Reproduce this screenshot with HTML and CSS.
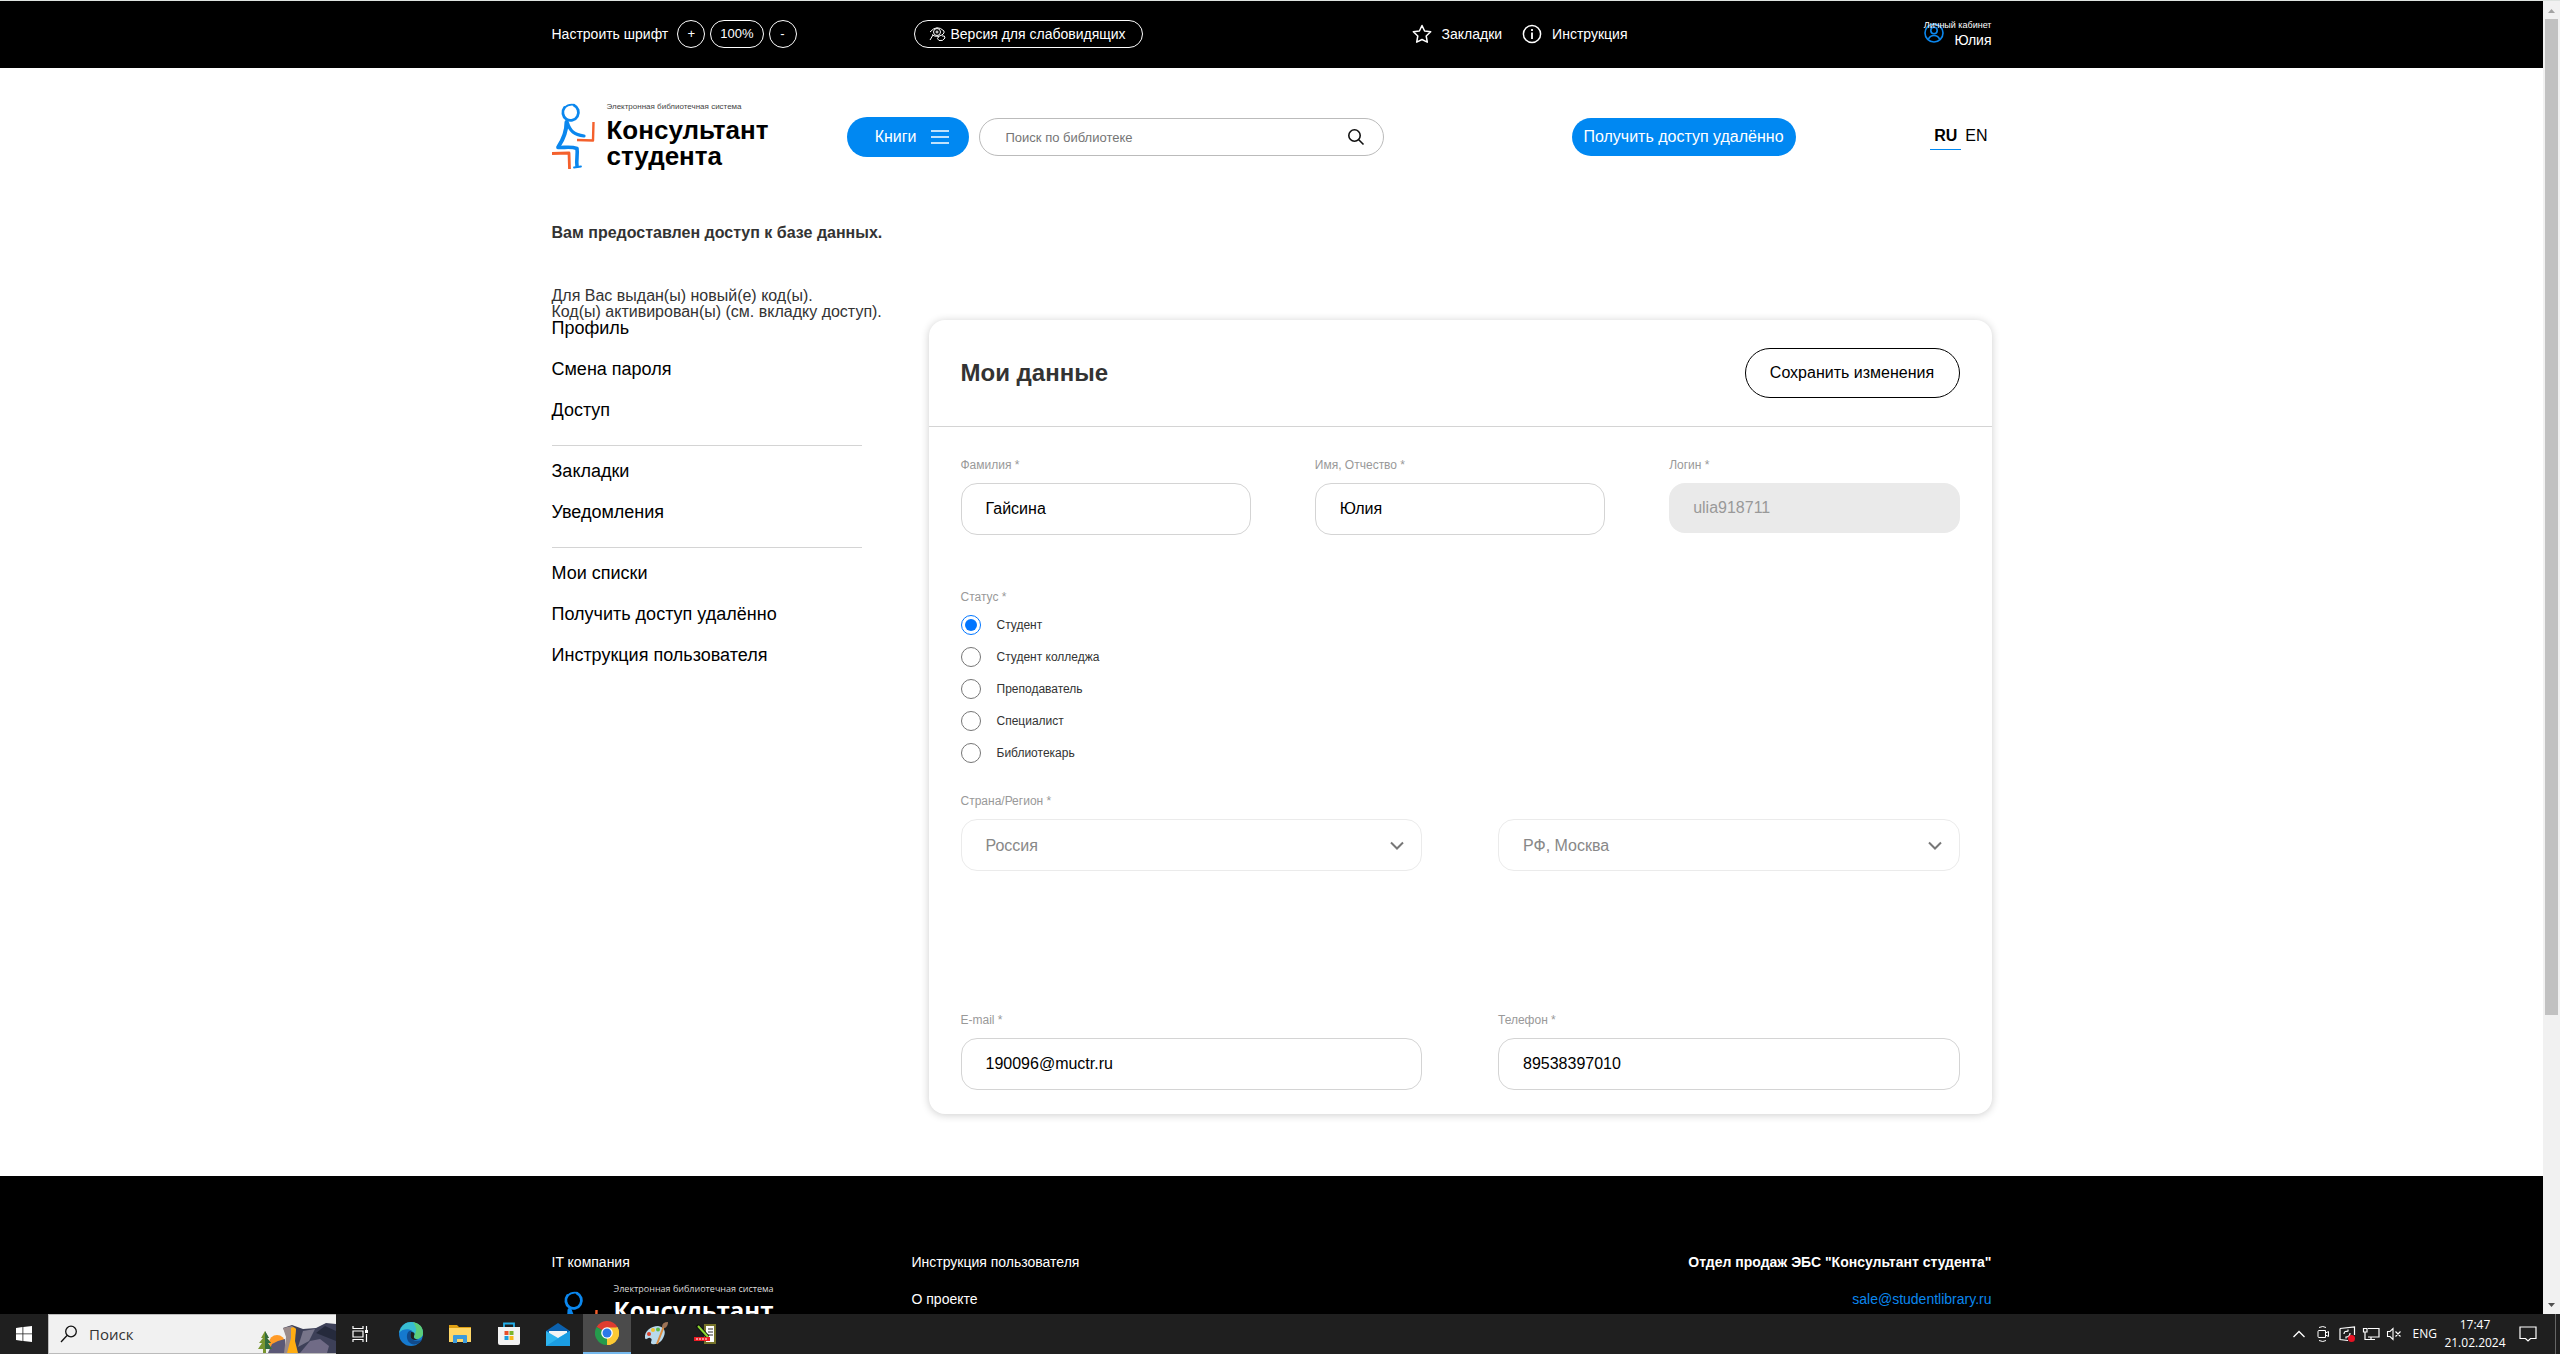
FILE: index.html
```html
<!DOCTYPE html>
<html lang="ru">
<head>
<meta charset="utf-8">
<title>Мои данные — Консультант студента</title>
<link rel="stylesheet" href="styles.css">
</head>
<body>
<svg class="sprite" aria-hidden="true">
  <symbol id="logo-figure" viewBox="0 0 43 68">
    <g fill="none" stroke="#0b87ee" stroke-linecap="round" stroke-linejoin="round">
      <path d="M12.500 4.500A7.800 8 0 1 0 22 2.200" stroke-width="2.800"/>
      <path d="M13 4.500Q16 1 22 1.800" stroke-width="1.600"/>
      <path d="M14.500 19C14.500 28 11.500 36 6.500 43.500" stroke-width="4"/>
      <path d="M15.500 20C18 28 22 31.500 32 33" stroke-width="3.200"/>
      <path d="M6 44.500C12 45 18 43 25 45.500C26 52 24 57 25 63" stroke-width="3.600"/>
      <path d="M22 64.500L29 63.500" stroke-width="1.800"/>
    </g>
    <g fill="none" stroke="#f4602c" stroke-linejoin="round">
      <path d="M41.500 19L41 37.500L25 37" stroke-width="2.400"/>
      <path d="M0 50.500L17 50L17.500 66" stroke-width="2.800"/>
    </g>
  </symbol>
</svg>

<div class="browser">
  <div class="page">
    <div class="topbar">
      <div class="wrap topbar-row">
        <div class="font-size">
          <span>Настроить шрифт</span>
          <button class="pill round" type="button">+</button>
          <button class="pill" type="button">100%</button>
          <button class="pill round" type="button">-</button>
        </div>
        <button class="pill vision" type="button">
          <svg width="17" height="16" viewBox="0 0 17 16" fill="none" stroke="#fff"><path d="M1 6Q8-2 15 5Q16 7 13 9Q7 12 3 8.500"/><circle cx="8" cy="6" r="3.500"/><circle cx="8" cy="6" r="1"/><path d="M4 9L1 14M10 10Q7 13 10 14.500Q14 15.500 16 12Q16 9 13 10"/></svg>
          Версия для слабовидящих
        </button>
        <nav class="quick">
          <a href="#"><svg width="20" height="20" viewBox="0 0 20 20" fill="none" stroke="#fff" stroke-width="1.500" stroke-linejoin="round"><path d="M10 1.500L12.600 7L18.700 7.800L14.200 12L15.300 18.200L10 15.500L4.700 18.200L5.800 12L1.300 7.800L7.400 7Z"/></svg>Закладки</a>
          <a href="#"><svg width="20" height="20" viewBox="0 0 20 20" fill="none" stroke="#fff" stroke-width="1.500"><circle cx="10" cy="10" r="8.600"/><path d="M10 8.500V15M10 5V7" stroke-width="1.800"/></svg>Инструкция</a>
        </nav>
        <a class="account" href="#">
          <svg class="account-icon" width="20" height="20" viewBox="0 0 20 20" fill="none" stroke="#0b87ee" stroke-width="1.600"><circle cx="10" cy="10" r="9"/><circle cx="10" cy="7.500" r="3.200"/><path d="M4.500 16Q6 12.500 10 12.500T15.500 16"/></svg>
          <span class="account-title">Личный кабинет</span>
          <span class="account-name">Юлия</span>
        </a>
      </div>
    </div>

    <header class="wrap header">
      <a class="logo" href="#">
        <svg width="43" height="68"><use href="#logo-figure"/></svg>
        <span><small>Электронная библиотечная система</small><b>Консультант<br>студента</b></span>
      </a>
      <button class="blue books" type="button">Книги
        <svg width="18" height="14" viewBox="0 0 18 14" stroke="#fff" stroke-width="1.500"><path d="M0 1H18M0 7H18M0 13H18"/></svg>
      </button>
      <form class="search">
        <input type="text" placeholder="Поиск по библиотеке" aria-label="Поиск по библиотеке">
        <button type="button" aria-label="Найти"><svg width="18" height="18" viewBox="0 0 18 18" fill="none" stroke="#111" stroke-width="1.600"><circle cx="7.500" cy="7.500" r="5.700"/><path d="M11.500 11.500L16.500 16.500"/></svg></button>
      </form>
      <button class="blue remote" type="button">Получить доступ удалённо</button>
      <nav class="langs"><a class="current" href="#">RU</a><a href="#">EN</a></nav>
    </header>

    <main class="wrap main">
      <p class="notice">Вам предоставлен доступ к базе данных.</p>
      <p class="message">Для Вас выдан(ы) новый(е) код(ы).<br>Код(ы) активирован(ы) (см. вкладку доступ).</p>
      <div class="columns">
        <nav class="side">
          <ul>
            <li><a href="#">Профиль</a></li>
            <li><a href="#">Смена пароля</a></li>
            <li><a href="#">Доступ</a></li>
          </ul>
          <ul>
            <li><a href="#">Закладки</a></li>
            <li><a href="#">Уведомления</a></li>
          </ul>
          <ul>
            <li><a href="#">Мои списки</a></li>
            <li><a href="#">Получить доступ удалённо</a></li>
            <li><a href="#">Инструкция пользователя</a></li>
          </ul>
        </nav>

        <form class="card">
          <div class="card-head">
            <h1>Мои данные</h1>
            <button class="save" type="button">Сохранить изменения</button>
          </div>
          <div class="card-body">
            <div class="row three">
              <div class="field"><label for="surname">Фамилия *</label><input id="surname" type="text" value="Гайсина"></div>
              <div class="field"><label for="name">Имя, Отчество *</label><input id="name" type="text" value="Юлия"></div>
              <div class="field"><label for="login">Логин *</label><input id="login" type="text" value="ulia918711" disabled></div>
            </div>
            <fieldset class="status">
              <legend>Статус *</legend>
              <label><input type="radio" name="status" checked>Студент</label>
              <label><input type="radio" name="status">Студент колледжа</label>
              <label><input type="radio" name="status">Преподаватель</label>
              <label><input type="radio" name="status">Специалист</label>
              <label><input type="radio" name="status">Библиотекарь</label>
            </fieldset>
            <div class="row two region">
              <div class="field"><label for="country">Страна/Регион *</label>
                <div class="select"><select id="country"><option>Россия</option></select><svg width="14" height="9" viewBox="0 0 14 9" fill="none" stroke="#777" stroke-width="2"><path d="M1 1.500L7 7.500L13 1.500"/></svg></div>
              </div>
              <div class="field">
                <div class="select"><select aria-label="Город"><option>РФ, Москва</option></select><svg width="14" height="9" viewBox="0 0 14 9" fill="none" stroke="#777" stroke-width="2"><path d="M1 1.500L7 7.500L13 1.500"/></svg></div>
              </div>
            </div>
            <div class="row two contacts">
              <div class="field"><label for="email">E-mail *</label><input id="email" type="text" value="190096@muctr.ru"></div>
              <div class="field"><label for="phone">Телефон *</label><input id="phone" type="text" value="89538397010"></div>
            </div>
          </div>
        </form>
      </div>
    </main>

    <footer class="footer">
      <div class="wrap footer-grid">
        <div class="footer-brand">
          <a href="#">IT компания</a>
          <a class="footer-logo" href="#">
            <svg width="43" height="68"><use href="#logo-figure"/></svg>
            <span><small>Электронная библиотечная система</small><b>Консультант<br>студента</b></span>
          </a>
        </div>
        <div class="footer-links"><a href="#">Инструкция пользователя</a><a href="#">О проекте</a></div>
        <div class="footer-links sales"><b>Отдел продаж ЭБС "Консультант студента"</b><a class="mail" href="#">sale@studentlibrary.ru</a></div>
      </div>
    </footer>
  </div>
  <div class="scrollbar" aria-hidden="true">
    <svg width="17" height="18" viewBox="0 0 17 18"><path d="M5 12L8.500 8L12 12Z" fill="#a3a3a3"/></svg>
    <div class="track"><div class="thumb"></div></div>
    <svg width="17" height="18" viewBox="0 0 17 18"><path d="M5 7L8.500 11L12 7Z" fill="#505050"/></svg>
  </div>
</div>

<div class="taskbar">
  <button class="start" type="button" aria-label="Пуск"><svg width="16" height="16" viewBox="0 0 16 16" fill="#fff"><path d="M0 2L6.500 1V7.500H0ZM7.300 .900L16 0V7.500H7.300ZM0 8.300H6.500V15L0 14ZM7.300 8.300H16V16L7.300 15Z"/></svg></button>
  <div class="task-search">
    <svg width="18" height="18" viewBox="0 0 18 18" fill="none" stroke="#111" stroke-width="1.300"><circle cx="11" cy="6.500" r="5.300"/><path d="M7 10.500L1 17"/></svg>
    <input type="text" placeholder="Поиск" aria-label="Поиск">
    <svg class="scene" width="78" height="30" viewBox="0 0 78 30">
      <circle cx="19" cy="20" r="8" fill="#ff9b28"/>
      <path d="M10 30L14 21L20 18L27 16V30Z" fill="#5b5876"/>
      <path d="M25 5L34 2L45 6L58 5L68 0L78 1V30H28L30 14Z" fill="#3d4058"/>
      <path d="M25 5L34 3L38 6L34 30H26L28 14Z" fill="#9a8b8b"/>
      <path d="M45 8L57 6L51 18L40 24Z" fill="#77758a"/>
      <path d="M58 10L67 3L78 8V18Z" fill="#252a3c"/>
      <path d="M42 30L52 18L62 16L71 23L69 30Z" fill="#706b86"/>
      <path d="M33 5Q36 3 38 6L37 18L40 30H29L33 15Z" fill="#ffad12"/>
      <path d="M7 8L11 15H9L13 20H10L14 26H8V30H5V26H0L4 20H1L5 15H3Z" fill="#78952f"/>
      <path d="M7 8L11 15H9L13 20H10L14 26H7Z" fill="#346c3e"/>
    </svg>
  </div>
  <button class="task view" type="button" aria-label="Представление задач"><svg width="16" height="16" viewBox="0 0 16 16" fill="none" stroke="#fff" stroke-width="1.200"><path d="M1 0V2.500H11V0M1 16V13.500H11V16M1 5H11V11H1ZM14.500 0V4M14.500 8V16"/><path d="M13 4H16V7H13Z" fill="#fff" stroke="none"/></svg></button>
  <div class="apps">
    <button class="task" type="button" aria-label="Edge"><svg width="24" height="24" viewBox="0 0 24 24"><circle cx="12" cy="12" r="12" fill="#1579ce"/><path d="M0 11C2 3 7 0 12 0C19 0 24 5 24 11C24 15 20 17 17 17C14 16 15 14 15 12C14 7 5 5 0 11Z" fill="#38bdd2"/><path d="M14 0Q24 2 24 11C24 15 20 17 17 17Q14 15 16 12Q19 7 14 0Z" fill="#5ccd79"/><path d="M8 13C7 19 12 24 18 22Q21 21 23 18C17 20 11 18 11 13Q11 10 13 9Q9 8 8 13Z" fill="#114a8b"/><path d="M12 10Q17 10 15 14Q14 17 19 17.500Q13 19 11.500 15Q11 12 12 10Z" fill="#1f1f1f"/></svg></button>
    <button class="task" type="button" aria-label="Проводник"><svg width="22" height="20" viewBox="0 0 22 20"><path d="M0 1H8L10 3H22V6H0Z" fill="#dfa013"/><path d="M0 4H22V18H0Z" fill="#ffd767"/><path d="M4 19V12Q4 11 5 11H17Q18 11 18 12V19H14V15H8V19Z" fill="#3c9bdc"/></svg></button>
    <button class="task" type="button" aria-label="Магазин"><svg width="24" height="24" viewBox="0 0 24 24"><path d="M7 6V1.500H17V6" fill="none" stroke="#24b0ea" stroke-width="1.800"/><path d="M1 5H23V21Q23 23 21 23H3Q1 23 1 21Z" fill="#f3f3f3"/><path d="M7.500 9H11.500V13H7.500Z" fill="#e8502a"/><path d="M12.500 9H16.500V13H12.500Z" fill="#7bb52d"/><path d="M7.500 14H11.500V18H7.500Z" fill="#1b9ddd"/><path d="M12.500 14H16.500V18H12.500Z" fill="#f8b81c"/></svg></button>
    <button class="task" type="button" aria-label="Почта"><svg width="24" height="23" viewBox="0 0 24 23"><path d="M0 8L12 0L24 8V12H0Z" fill="#0b61ae"/><path d="M3 8H21V13L12 17L3 13Z" fill="#f4f4f4"/><path d="M0 8L12 15L24 8V23H0Z" fill="#2fb5ef"/><path d="M0 23L24 8V23Z" fill="#1b9de2"/></svg></button>
    <button class="task active" type="button" aria-label="Chrome"><svg width="24" height="24" viewBox="0 0 24 24"><path d="M12 12L1.600 6A12 12 0 0 1 22.400 6Z" fill="#df3c30"/><path d="M12 12L22.400 6A12 12 0 0 1 12 24Z" fill="#fcc934"/><path d="M12 12L12 24A12 12 0 0 1 1.600 6Z" fill="#259b4c"/><path d="M12 6.500H22.600A12 12 0 0 1 12 24L16.800 14.800Z" fill="#fcc934"/><circle cx="12" cy="12" r="5.800" fill="#fff"/><circle cx="12" cy="12" r="4.500" fill="#2b78e8"/></svg></button>
    <button class="task" type="button" aria-label="Paint"><svg width="24" height="24" viewBox="0 0 24 24"><path d="M1 16C0 9 7 4 14 4C20 5 22 9 20 14C18 20 13 23 8 22C5 21 10 17 6 16C4 15 2 19 1 16Z" fill="#b8d9ec"/><circle cx="5" cy="12" r="2" fill="#d8432e"/><circle cx="9" cy="8" r="2" fill="#f3c331"/><circle cx="14" cy="7.500" r="2" fill="#5dba47"/><path d="M20 4L13 22" stroke="#dd8b3e" stroke-width="2"/><path d="M18 5Q18 0 24 0Q24 4 21 6Z" fill="#9c7356"/></svg></button>
    <button class="task" type="button" aria-label="Блокнот"><svg width="22" height="20" viewBox="0 0 22 20"><path d="M11 1H21V19H11Z" fill="#fff" stroke="#77742a" stroke-width="2"/><path d="M14 5H19M14 8H19M14 11H19" stroke="#333"/><path d="M3 1L14 13" stroke="#111" stroke-width="4"/><path d="M4 2L14 13" stroke="#8bd82e" stroke-width="2"/><path d="M0 13H16V17H0Z" fill="#ed1c24"/><path d="M2 15H14" stroke="#fff" stroke-dasharray="2 1"/></svg></button>
  </div>
  <div class="tray">
    <svg width="24" height="16" viewBox="0 0 24 16" fill="none" stroke="#fff" stroke-width="1.300"><path d="M6.500 11L12 5.500L17.500 11"/></svg>
    <svg width="24" height="16" viewBox="0 0 24 16" fill="none" stroke="#fff"><path d="M8 4.500H14.500V11.500H8Q7 11.500 7 10.500V5.500Q7 4.500 8 4.500M14.500 7L17.500 5.500V10.500L14.500 9M8 1.500Q12 -.500 15 1.500M8 14.500Q12 16.500 15 14.500"/></svg>
    <svg width="24" height="16" viewBox="0 0 24 16" fill="none" stroke="#fff" stroke-width="1.200"><path d="M5 2.500L19.500 .800V9M5 2.500V13.500L13 14.500M9 8Q9 5 13 5V3.500M13 5.500H11M15 7Q15 11 11 11V12.500"/><circle cx="16.500" cy="12.500" r="3.500" fill="#e81123" stroke="none"/></svg>
    <svg width="24" height="16" viewBox="0 0 24 16" fill="none" stroke="#fff" stroke-width="1.200"><path d="M9 2.500H20V11H9M4.500 2.500H8V6H4.500ZM6 6V13.500H16M12 11V13.500"/></svg>
    <svg width="24" height="16" viewBox="0 0 24 16" fill="none" stroke="#fff" stroke-width="1.100"><path d="M4.500 5.500H7L10 2.500V13.500L7 10.500H4.500ZM12.500 5.500L17.500 10.500M17.500 5.500L12.500 10.500"/></svg>
    <span class="lang">ENG</span>
    <span class="clock">17:47<br>21.02.2024</span>
    <svg class="note" width="18" height="18" viewBox="0 0 18 18" fill="none" stroke="#fff" stroke-width="1.200"><path d="M1 2H17V13.500H11.500L9 16L6.500 13.500H1Z"/></svg>
    <span class="desktop-edge"></span>
  </div>
</div>
</body>
</html>
```
FILE: styles.css
```css
* { box-sizing: border-box; }

body {
  margin: 0;
  height: 100vh;
  display: flex;
  flex-direction: column;
  overflow: hidden;
  font-family: "Liberation Sans", Arial, sans-serif;
  font-size: 16px;
  color: #333;
  background: #fff;
}

a { color: inherit; text-decoration: none; }
button, input, select { font: inherit; color: inherit; }
button { cursor: pointer; padding: 0; border: 0; background: none; }
svg { display: block; flex: none; }
ul, p, h1 { margin: 0; padding: 0; }
ul { list-style: none; }
.sprite { position: absolute; width: 0; height: 0; }

.browser { flex: 1; min-height: 0; display: flex; border-top: 1px solid #dee3e0; }
.page { flex: 1; min-width: 0; overflow: hidden; }
.wrap { max-width: 1440px; margin: 0 auto; }

/* Top bar */
.topbar { background: #000; color: #fff; font-size: 14px; padding: 18px 0 20px; }
.topbar-row { display: grid; grid-template-columns: 362px 498px 1fr auto; align-items: center; }
.font-size { display: flex; align-items: center; gap: 5px; }
.font-size span { margin-right: 4px; }
.pill { height: 28px; padding: 0 9px; border: 1px solid #fff; border-radius: 14px; font-size: 13px; }
.round { width: 28px; padding: 0; }
.vision { justify-self: start; display: flex; align-items: center; gap: 5px; padding: 0 16px 0 14px; font-size: 14px; }
.quick { display: flex; gap: 20px; }
.quick a { display: flex; align-items: center; gap: 10px; }
.account { position: relative; display: flex; flex-direction: column; align-items: flex-end; }
.account-icon { position: absolute; left: 0; top: 4px; }
.account-title { position: relative; font-size: 9px; line-height: 13px; }
.account-name { line-height: 16px; }

/* Header */
.header { height: 138px; display: flex; align-items: center; }
.logo { width: 295px; display: flex; gap: 12px; color: #000; }
.logo small, .footer-logo small { display: block; font-size: 8px; line-height: 8px; color: #444; }
.logo b { display: block; margin-top: 6px; font-size: 26px; line-height: 26px; }
.blue { background: #0088f2; color: #fff; border-radius: 20px; }
.books { width: 122px; height: 40px; display: flex; align-items: center; justify-content: flex-end; gap: 14px; padding-right: 20px; }
.search { width: 405px; height: 38px; margin-left: 10px; display: flex; align-items: center; padding: 0 18px 0 26px; border: 1px solid #bbb; border-radius: 19px; }
.search input { flex: 1; min-width: 0; border: 0; padding: 0; outline: 0; background: none; font-size: 13px; }
.search input::placeholder { color: #757575; opacity: 1; }
.remote { width: 224px; height: 38px; margin-left: auto; }
.langs { width: 196px; display: flex; justify-content: flex-end; gap: 4px; color: #000; padding-right: 4px; }
.langs a { padding: 3px 0 4px; }
.langs .current { font-weight: bold; padding: 3px 4px 4px; border-bottom: 1px solid #0088f2; }

/* Main */
.main { padding: 17px 0 62px; }
.notice { font-weight: bold; line-height: 20px; }
.message { margin-top: 45px; line-height: 16px; }
.columns { display: grid; grid-template-columns: 310px 1fr; gap: 67px; align-items: start; }
.side { color: #000; font-size: 18px; line-height: 16px; }
.side ul { display: flex; flex-direction: column; gap: 25px; }
.side ul + ul { margin-top: 27px; padding-top: 17px; border-top: 1px solid #d4d4d4; }
.side a { display: block; }

.card { border-radius: 16px; background: #fff; box-shadow: 0 1px 8px rgba(0, 0, 0, .2); }
.card-head { display: flex; justify-content: space-between; align-items: center; padding: 28px 32px; border-bottom: 1px solid #d4d4d4; }
.card-head h1 { font-size: 24px; line-height: 28px; }
.save { width: 215px; height: 50px; border: 1px solid #000; border-radius: 25px; color: #000; }
.card-body { padding: 32px 32px 24px; }
.row { display: grid; align-items: end; }
.three { grid-template-columns: repeat(3, 1fr); column-gap: 64px; }
.two { grid-template-columns: repeat(2, 1fr); column-gap: 76px; }
.field label, .status legend { display: block; padding: 0 0 2px; margin-bottom: 10px; font-size: 12px; line-height: 12px; color: #999; }
.field input, .select select { display: block; width: 100%; height: 52px; padding: 0 24px; border: 1px solid #d4d4d4; border-radius: 16px; background: #fff; color: #000; outline: 0; }
.field input:disabled { height: 50px; margin-bottom: 2px; border: 0; background: #eaeaea; color: #999; }
.select { position: relative; }
.select select { appearance: none; border-color: #ebebeb; color: #888; }
.select svg { position: absolute; right: 18px; top: 22px; pointer-events: none; }
.status { margin: 56px 0 0; padding: 0; border: 0; }
.status label { display: flex; align-items: center; gap: 16px; font-size: 12px; line-height: 20px; }
.status label + label { margin-top: 12px; }
.status input { width: 20px; height: 20px; margin: 0; }
.region { margin-top: 32px; }
.contacts { margin-top: 143px; }

/* Footer */
.footer { background: #000; color: #fff; padding: 78px 0; font-size: 14px; line-height: 16px; }
.footer-grid { display: grid; grid-template-columns: 360px 1fr 1fr; }
.footer-brand, .footer-links { display: flex; flex-direction: column; gap: 21px; }
.footer-brand { gap: 13px; }
.footer-logo { display: flex; gap: 16px; padding-left: 3px; font-family: "Open Sans", "Noto Sans", sans-serif; }
.footer-logo svg { margin-top: 8px; }
.footer-logo small { font-size: 9px; line-height: 12px; color: #ddd; }
.footer-logo b { display: block; margin-top: 2px; font-size: 24px; line-height: 26px; }
.sales { text-align: right; }
.mail { color: #0b87ee; }

/* Scrollbar */
.scrollbar { width: 17px; display: flex; flex-direction: column; background: #f1f1f1; }
.track { flex: 1; padding: 0 2px; }
.thumb { height: 78%; background: #c1c1c1; }

/* Taskbar */
.taskbar { height: 40px; display: flex; background: #1f1f1f; color: #fff; font-family: "Open Sans", "Noto Sans", sans-serif; }
.start, .task { width: 48px; display: flex; align-items: center; justify-content: center; }
.task-search { width: 288px; display: flex; align-items: center; padding-left: 11px; background: #f1f1f1; border: 1px solid #bbb; border-right: 0; color: #333; }
.task-search input { flex: 1; min-width: 0; padding: 0 0 0 11px; border: 0; outline: 0; background: none; font-size: 15px; }
.task-search input::placeholder { color: #333; opacity: 1; }
.scene { align-self: flex-end; }
.view { margin-right: 3px; }
.apps { display: flex; gap: 1px; }
.active { background: #4b4b4b; border-bottom: 2px solid #76b9ed; }
.tray { margin-left: auto; display: flex; align-items: center; padding-right: 4px; font-size: 12px; line-height: 18px; }
.lang { margin-left: 6px; }
.clock { width: 76px; text-align: center; }
.note { margin: 0 18px 0 6px; }
.desktop-edge { width: 1px; height: 40px; background: #666; }
```
